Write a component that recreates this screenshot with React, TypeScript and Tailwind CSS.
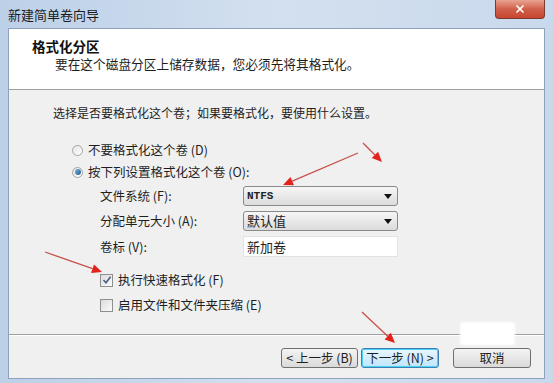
import { X } from 'lucide-react'

const FONT = "font-['Noto_Sans_CJK_SC','Noto_Sans',sans-serif]"

function Radio({ checked }: { checked?: boolean }) {
  return (
    <span className="w-[11px] h-[11px] rounded-full border border-[#a4a4a4] bg-gradient-to-br from-[#e4e4e4] to-[#ffffff] flex items-center justify-center shrink-0">
      {checked && <span className="w-[6px] h-[6px] rounded-full bg-gradient-to-br from-[#79b2df] to-[#1d5d96]" />}
    </span>
  )
}

function Checkbox({ checked }: { checked?: boolean }) {
  return (
    <span className="w-[13px] h-[13px] border border-[#8e8f8f] bg-gradient-to-br from-[#dcdcdc] to-[#fbfbfb] flex items-center justify-center shrink-0">
      {checked && (
        <svg width="10" height="10" viewBox="0 0 10 10">
          <path d="M1.5 5 L4 7.8 L8.6 1.8" fill="none" stroke="#4a5f80" strokeWidth="1.6" />
        </svg>
      )}
    </span>
  )
}

function Select({ value, mono }: { value: string; mono?: boolean }) {
  return (
    <div className="w-[155px] h-[20px] border border-[#8a8a8a] rounded-[3px] bg-gradient-to-b from-[#f6f6f6] to-[#dcdcdc] flex items-center justify-between pl-[3px] pr-[5px]">
      <span className={mono ? "text-[11px] font-bold font-['Liberation_Mono',monospace] text-[#222]" : 'text-[13px] text-[#222]'}>{value}</span>
      <span className="w-0 h-0 border-l-[4px] border-r-[4px] border-t-[5px] border-l-transparent border-r-transparent border-t-[#111]" />
    </div>
  )
}

function Arrows() {
  const arrows = [
    { x1: 358, y1: 153, x2: 283, y2: 185 },
    { x1: 363, y1: 143, x2: 382, y2: 162 },
    { x1: 45, y1: 252, x2: 102, y2: 272 },
    { x1: 362, y1: 312, x2: 395, y2: 343 },
  ]
  return (
    <svg className="absolute inset-0 pointer-events-none" width="553" height="383">
      {arrows.map((a, i) => {
        const ang = Math.atan2(a.y2 - a.y1, a.x2 - a.x1)
        const l = 10
        const w = 4.5
        const bx = a.x2 - l * Math.cos(ang)
        const by = a.y2 - l * Math.sin(ang)
        const px = -Math.sin(ang) * w
        const py = Math.cos(ang) * w
        return (
          <g key={i}>
            <line x1={a.x1} y1={a.y1} x2={bx} y2={by} stroke="#c8504a" strokeWidth="1.3" />
            <polygon points={`${a.x2},${a.y2} ${bx + px},${by + py} ${bx - px},${by - py}`} fill="#e3231b" />
          </g>
        )
      })}
    </svg>
  )
}

export default function App() {
  return (
    <div className={`relative w-[553px] h-[383px] overflow-hidden bg-gradient-to-r from-[#bcd0e8] via-[#d3e0ef] to-[#c9d9ec] flex flex-col ${FONT}`}>
      {/* Title bar */}
      <div className="h-[28px] flex items-start justify-between pl-[8px] pr-[8px] shrink-0">
        <span className="mt-[6px] text-[13px] leading-[18px] text-[#1a1a1a]">新建简单卷向导</span>
        <div className="w-[50px] h-[19px] rounded-b-[4px] border border-t-0 border-[#7a3a30] bg-gradient-to-b from-[#e8a493] via-[#d0604b] to-[#c8452f] flex items-center justify-center">
          <X size={12} strokeWidth={3.5} className="text-white" />
        </div>
      </div>

      {/* Client area */}
      <div className="ml-[8px] mr-[8px] h-[351px] border border-[#8ea2bb] bg-[#f0f0f0] flex flex-col">
        {/* Header */}
        <div className="h-[61px] bg-white border-b border-[#a0a0a0] flex flex-col pt-[10px] shrink-0">
          <span className="pl-[23px] text-[13.5px] leading-[15px] font-bold text-[#111]">格式化分区</span>
          <span className="pl-[46px] mt-[3px] text-[12.7px] leading-[14px] text-[#1e1e1e]">要在这个磁盘分区上储存数据，您必须先将其格式化。</span>
        </div>

        {/* Body */}
        <div className="flex-1 flex flex-col text-[12.5px] leading-[16px] text-[#1e1e1e]">
          <div className="pl-[44px] mt-[15px] text-[12px]">选择是否要格式化这个卷；如果要格式化，要使用什么设置。</div>

          <div className="pl-[63px] mt-[21px] flex items-center gap-[5px]">
            <Radio />
            <span>不要格式化这个卷 (D)</span>
          </div>
          <div className="pl-[63px] mt-[6px] flex items-center gap-[5px]">
            <Radio checked />
            <span>按下列设置格式化这个卷 (O):</span>
          </div>

          <div className="pl-[91px] mt-[6px] grid grid-cols-[143px_155px] gap-y-[5px] items-center">
            <span>文件系统 (F):</span>
            <Select value="NTFS" mono />
            <span>分配单元大小 (A):</span>
            <Select value="默认值" />
            <span>卷标 (V):</span>
            <div className="w-[155px] h-[21px] bg-white border border-[#e2e2e2] flex items-center pl-[3px] text-[13px]">新加卷</div>
          </div>

          <div className="pl-[91px] mt-[15px] flex items-center gap-[5px]">
            <Checkbox checked />
            <span>执行快速格式化 (F)</span>
          </div>
          <div className="pl-[91px] mt-[9px] flex items-center gap-[5px]">
            <Checkbox />
            <span>启用文件和文件夹压缩 (E)</span>
          </div>
        </div>

        {/* Footer */}
        <div className="h-[44px] border-t border-[#a0a0a0] shadow-[inset_0_1px_0_#ffffff] flex items-start justify-end pt-[13px] pr-[13px] shrink-0 text-[12.5px] text-[#1e1e1e]">
          <button className="w-[77px] h-[20px] border border-[#707070] rounded-[3px] bg-gradient-to-b from-[#f4f4f4] to-[#dadada] flex items-center justify-center leading-none">
            &lt; 上一步 (B)
          </button>
          <button className="ml-[3px] w-[78px] h-[20px] border border-[#3c7fb1] rounded-[3px] bg-gradient-to-b from-[#eaf6fd] to-[#bee6fd] shadow-[inset_0_0_0_1px_#48d0f7] flex items-center justify-center leading-none">
            下一步 (N) &gt;
          </button>
          <button className="ml-[14px] w-[78px] h-[20px] border border-[#707070] rounded-[3px] bg-gradient-to-b from-[#f4f4f4] to-[#dadada] flex items-center justify-center leading-none">
            取消
          </button>
        </div>
      </div>

      {/* Erased watermark patch */}
      <div className="absolute left-[460px] top-[322px] w-[55px] h-[23px] bg-white rounded-[3px] blur-[1px]" />
      <Arrows />
    </div>
  )
}
